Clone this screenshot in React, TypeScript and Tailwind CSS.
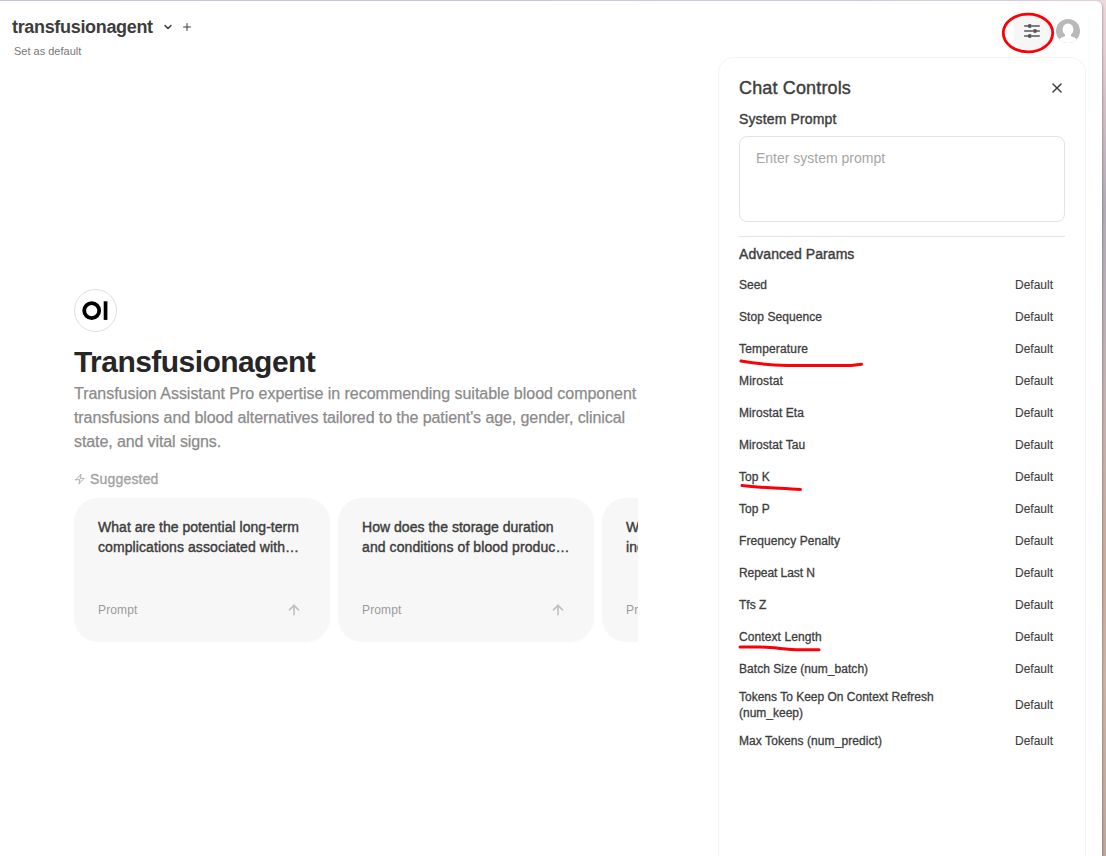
import { ArrowUp, ChevronDown, Plus, X } from "lucide-react";

const params = [
  { label: "Seed", tracking: "tracking-normal" },
  { label: "Stop Sequence", tracking: "tracking-[0.08px]" },
  { label: "Temperature", tracking: "tracking-[0.16px]" },
  { label: "Mirostat", tracking: "tracking-[0.18px]" },
  { label: "Mirostat Eta", tracking: "tracking-[0.08px]" },
  { label: "Mirostat Tau", tracking: "tracking-[0.1px]" },
  { label: "Top K", tracking: "tracking-normal" },
  { label: "Top P", tracking: "tracking-normal" },
  { label: "Frequency Penalty", tracking: "tracking-[0.06px]" },
  { label: "Repeat Last N", tracking: "tracking-[-0.06px]" },
  { label: "Tfs Z", tracking: "tracking-normal" },
  { label: "Context Length", tracking: "tracking-[0.1px]" },
  { label: "Batch Size (num_batch)", tracking: "tracking-[0.05px]" },
  { label: "Tokens To Keep On Context Refresh (num_keep)", tracking: "tracking-normal" },
  { label: "Max Tokens (num_predict)", tracking: "tracking-[0.08px]" },
];

const prompts = [
  ["What are the potential long-term", "complications associated with…"],
  ["How does the storage duration", "and conditions of blood produc…"],
  ["What are the current", "indications for use"],
];

function Bolt() {
  return (
    <svg className="size-3" viewBox="0 0 24 24" fill="none" stroke="#a3a3a3" strokeWidth="1.8" strokeLinejoin="round" strokeLinecap="round">
      <path d="m3.75 13.5 10.5-11.25L12 10.5h8.25L9.75 21.75 12 13.5H3.75Z" />
    </svg>
  );
}

function Sliders() {
  return (
    <svg className="size-5" viewBox="0 0 24 24" fill="#575757" stroke="#575757" strokeWidth="1.9" strokeLinecap="round">
      <path d="M3.300 6h3.900M12 6h8.700M3.300 12h9.200M18.300 12h2.400M3.300 18h3.900M12 18h8.700" />
      <circle cx="9.300" cy="6" r="1.500" />
      <circle cx="15.600" cy="12" r="1.500" />
      <circle cx="9.300" cy="18" r="1.500" />
    </svg>
  );
}

function Annotations() {
  return (
    <svg className="pointer-events-none absolute inset-0" width="1106" height="856" fill="none" stroke="#fb0007" strokeWidth="3" strokeLinecap="round" strokeLinejoin="round">
      <ellipse cx="1028" cy="33" rx="24.7" ry="18.8" strokeWidth="2.8" />
      <path d="M741 361 C755 363.5 770 365 787 365.5 H851 L861.5 364.3" />
      <path d="M742 485.5 C762 488 780 488 800.5 489.5" />
      <path d="M740 647 H760 C775 647.3 785 649.5 800 649.8 H819" />
    </svg>
  );
}

export default function App() {
  return (
    <div className="relative h-[856px] w-[1106px] overflow-hidden bg-[linear-gradient(180deg,#ecd9dc_0px,#e6d1d6_45px,#d1bfc6_120px,#b2adb7_210px,#bab0b8_290px,#c6b4b3_400px,#c8ada0_560px,#cdb4a9_680px,#bda89f_856px)] pt-px pr-1 font-['Liberation_Sans',sans-serif] text-[#3d3d3d]">
      <div className="relative flex h-full flex-col rounded-tr-md bg-white shadow-[1px_1px_2px_rgba(0,0,0,0.22)]">
        <header className="flex h-14 shrink-0 justify-between pl-3">
          <div>
            <div className="mt-[14px] flex h-6 items-center">
              <h2 className="text-lg font-bold tracking-[-0.33px]">transfusionagent</h2>
              <ChevronDown className="ml-[9px] size-3" strokeWidth={3} />
              <Plus className="ml-[7px] size-3" strokeWidth={2} />
            </div>
            <div className="ml-0.5 mt-1 text-[11px] leading-4 text-[#777]">Set as default</div>
          </div>
          <div className="flex pr-[22px]">
            <div className="mt-3 flex h-9 w-9 items-center justify-center rounded-xl bg-[#f6f6f6]">
              <Sliders />
            </div>
            <svg className="ml-1.5 mt-[18px] size-6" viewBox="0 0 24 24">
              <defs><clipPath id="avatar"><circle cx="12" cy="12" r="12" /></clipPath></defs>
              <g clipPath="url(#avatar)">
                <rect width="24" height="24" fill="#b9b9b9" />
                <ellipse cx="12" cy="10.4" rx="5.4" ry="6" fill="#fff" />
                <path d="M9 14h6v3.3c2.7.8 5.5 1.7 6.4 3.7V24H2.6v-3c.9-2 3.700-2.900 6.400-3.700Z" fill="#fff" />
              </g>
            </svg>
          </div>
        </header>

        <div className="flex min-h-0 flex-1">
          <main className="w-[718px] shrink-0 pl-[74px] pt-[232px]">
            <div className="flex size-[43px] items-center justify-center rounded-full border border-[#dedede]">
              <svg width="27" height="20" viewBox="0 0 27 20">
                <circle cx="9.700" cy="9.600" r="7.500" fill="none" stroke="#000" strokeWidth="3.800" />
                <rect x="21.700" y="0.300" width="3.700" height="18.600" fill="#000" />
              </svg>
            </div>
            <h1 className="mt-3 text-3xl leading-9 font-bold tracking-[-0.55px] text-[#262626]">Transfusionagent</h1>
            <p className="mt-0.5 w-[600px] text-base leading-6 text-[#8b8b8b] [-webkit-text-stroke:0.25px]">
              <span className="block tracking-[-0.025px]">Transfusion Assistant Pro expertise in recommending suitable blood component</span>
              <span className="block tracking-[-0.085px]">transfusions and blood alternatives tailored to the patient's age, gender, clinical</span>
              <span className="block tracking-[-0.1px]">state, and vital signs.</span>
            </p>
            <div className="mt-[15px] flex h-5 items-center gap-1 text-sm text-[#a3a3a3] [-webkit-text-stroke:0.35px]">
              <Bolt />
              <span className="tracking-[0.18px]">Suggested</span>
            </div>
            <div className="mt-[9px] flex w-[564px] gap-2 overflow-hidden">
              {prompts.map(([first, second]) => (
                <div key={first} className="flex h-36 w-64 shrink-0 flex-col justify-between rounded-3xl bg-[#f7f7f7] px-6 pt-[19px] pb-[22px]">
                  <div className="text-sm leading-5 whitespace-nowrap [-webkit-text-stroke:0.4px]">
                    <div className="tracking-[0.03px]">{first}</div>
                    <div className="tracking-[0.09px]">{second}</div>
                  </div>
                  <div className="flex items-center justify-between text-xs leading-5 text-[#9b9b9b]">
                    <span className="tracking-[0.15px]">Prompt</span>
                    <ArrowUp className="mr-1 size-4 text-[#bdbdbd]" strokeWidth={2.4} />
                  </div>
                </div>
              ))}
            </div>
          </main>

          <aside className="w-[368px] shrink-0 rounded-t-2xl border border-b-0 border-[#f4f4f4] px-5 pt-4">
            <div className="flex h-7 items-center justify-between">
              <h2 className="text-lg tracking-[0.15px] [-webkit-text-stroke:0.4px]">Chat Controls</h2>
              <X className="size-4" strokeWidth={2.2} />
            </div>
            <div className="mt-[7px] text-sm leading-5 tracking-[0.14px] [-webkit-text-stroke:0.4px]">System Prompt</div>
            <div className="mt-[7px] h-[86px] rounded-lg border border-[#e3e3e3] px-4 py-[11px] text-sm leading-5 text-[#a6a6a6]">Enter system prompt</div>
            <div className="mt-[14px] h-px bg-[#e3e3e3]" />
            <div className="mt-[7px] text-sm leading-5 tracking-[0.07px] [-webkit-text-stroke:0.4px]">Advanced Params</div>
            <div className="mt-[5px] text-xs leading-4">
              {params.map(({ label, tracking }) => (
                <div key={label} className="flex min-h-8 items-center justify-between py-1 pr-3">
                  <span className={"max-w-[210px] [-webkit-text-stroke:0.3px] " + tracking}>{label}</span>
                  <span className="[-webkit-text-stroke:0.1px]">Default</span>
                </div>
              ))}
            </div>
          </aside>
        </div>
      </div>
      <div className="absolute top-0 left-0 h-px w-[1100px] bg-[linear-gradient(90deg,#c6c1df,#cdc8df_70%,#ddced9)]" />
      <Annotations />
    </div>
  );
}
